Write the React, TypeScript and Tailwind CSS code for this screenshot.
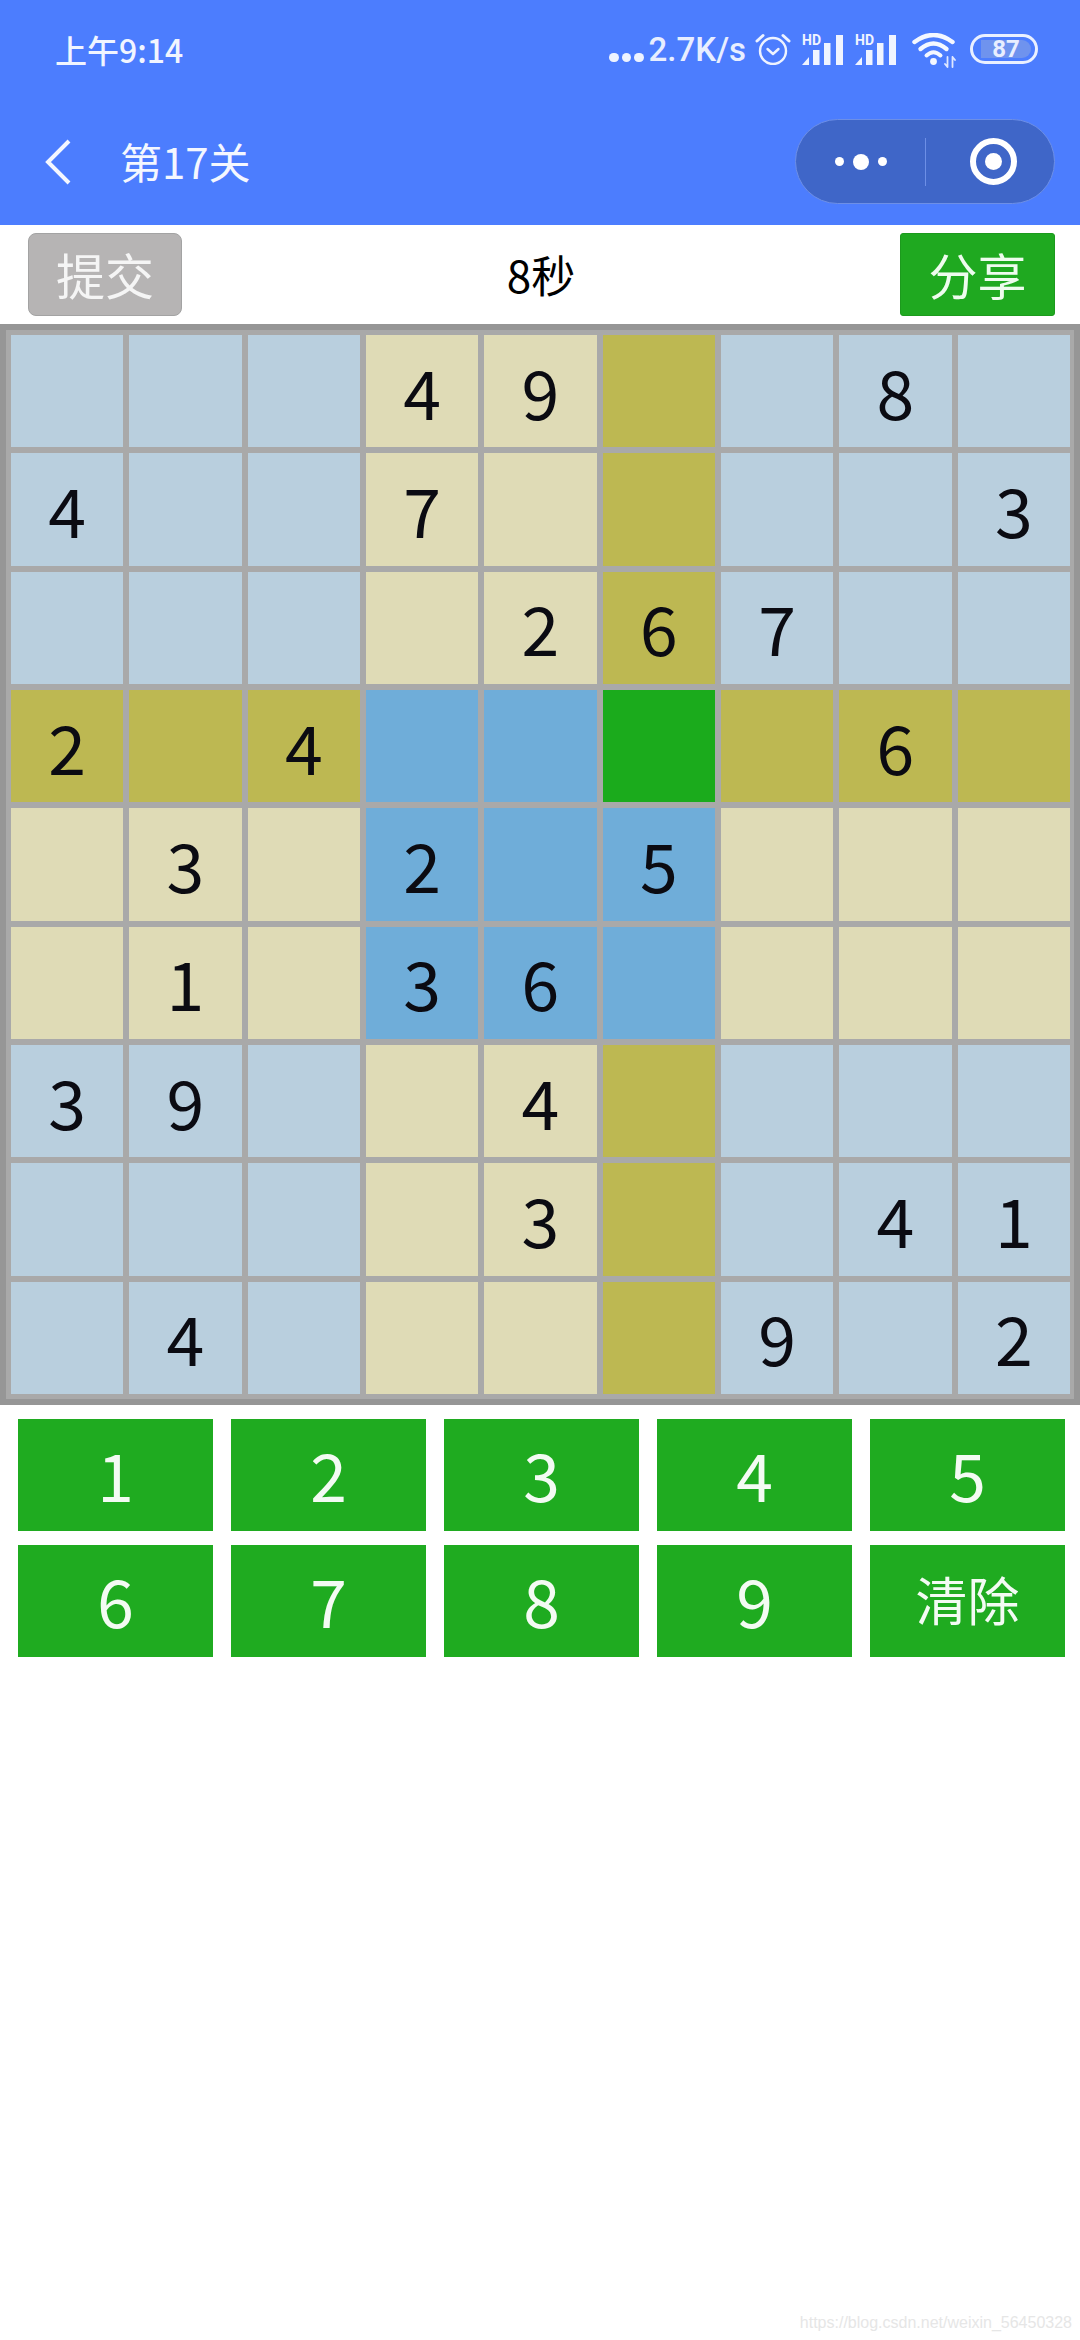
const cjk = "font-['Noto_Sans_CJK_SC',sans-serif]";

const board = [
  "...49..8.",
  "4..7....3",
  "....267..",
  "2.4....6.",
  ".3.2.5...",
  ".1.36....",
  "39..4....",
  "....3..41",
  ".4....9.2",
];

const keys = ["1", "2", "3", "4", "5", "6", "7", "8", "9", "清除"];

function cellColor(r: number, c: number) {
  if (r === 3 && c === 5) return "bg-[#1bab1c]";
  const midRow = r >= 3 && r <= 5;
  const midCol = c >= 3 && c <= 5;
  if (midRow && midCol) return "bg-[#6fadd9]";
  if (r === 3 || c === 5) return "bg-[#bdb852]";
  if (midRow || midCol) return "bg-[#dfdbb6]";
  return "bg-[#b9cfde]";
}

function Signal() {
  return (
    <svg width="41" height="34" viewBox="0 0 41 34" fill="#f0f4ff">
      <text x="0" y="13" fontSize="14" fontWeight="700" fontFamily="Roboto, sans-serif">HD</text>
      <path d="M0 33 L7 25 V33 Z" />
      <rect x="11" y="18" width="6.5" height="15" />
      <rect x="22" y="11" width="6.5" height="22" />
      <rect x="34" y="3" width="7" height="30" />
    </svg>
  );
}

function Alarm() {
  return (
    <svg width="38" height="32" viewBox="0 0 38 32" fill="none" stroke="#eef3ff" strokeLinecap="round" strokeLinejoin="round">
      <circle cx="19" cy="18" r="13" strokeWidth="2.4" />
      <path d="M13.5 16 L19 21 L24.5 16" strokeWidth="2.4" />
      <path d="M3 8 L9 2.5 M35 8 L29 2.5" strokeWidth="3" />
    </svg>
  );
}

function Wifi() {
  return (
    <svg width="44" height="36" viewBox="0 0 44 36" fill="none" stroke="#f4f7ff" strokeLinecap="round">
      <path d="M2.5 9 Q21.5 -5 40.5 9" strokeWidth="4.4" />
      <path d="M8.5 16 Q21.5 5 34.5 16" strokeWidth="4.4" />
      <path d="M14.5 22.5 Q21.5 16 28.5 22.5" strokeWidth="4" />
      <circle cx="21.5" cy="28.5" r="3.4" fill="#f4f7ff" stroke="none" />
      <path d="M35.5 24 V34 M33 31 L35.5 34 M40.5 24 V34 M40.5 24 L43 27" stroke="#dfe7ff" strokeWidth="1.8" />
    </svg>
  );
}

function Battery() {
  return (
    <div className="flex h-[30px] w-[68px] rounded-full border-[3px] border-[#eaf0ff] py-[3px] pr-[4px] pl-[8px]">
      <div className="flex h-full flex-1 items-center justify-center rounded-r-full bg-[#6f93ee] font-['Roboto',sans-serif] text-[24px] leading-none font-bold text-[#e8eeff]">
        87
      </div>
    </div>
  );
}

export default function App() {
  return (
    <div className={`flex h-[2340px] w-[1080px] flex-col overflow-hidden bg-white ${cjk}`}>
      {/* Header */}
      <div className="bg-[#4c7dfe] text-white">
        <div className="flex h-[98px] items-center justify-between pr-[42px] pl-[55px]">
          <span className="text-[32px] leading-none font-medium text-[#f1f5ff]">上午9:14</span>
          <div className="flex items-center">
            <div className="mt-[17px] flex gap-[3px]">
              <span className="h-[9.5px] w-[9.5px] rounded-full bg-[#eef3ff]" />
              <span className="h-[9.5px] w-[9.5px] rounded-full bg-[#eef3ff]" />
              <span className="h-[9.5px] w-[9.5px] rounded-full bg-[#eef3ff]" />
            </div>
            <span className="ml-[5px] font-['Roboto',sans-serif] text-[33px] leading-none font-medium text-[#e8eeff]">
              2.7K/s
            </span>
            <div className="ml-[8px]"><Alarm /></div>
            <div className="ml-[10px]"><Signal /></div>
            <div className="ml-[12px]"><Signal /></div>
            <div className="mt-[3px] ml-[16px]"><Wifi /></div>
            <div className="ml-[14px]"><Battery /></div>
          </div>
        </div>
        <div className="flex h-[127px] items-center justify-between pr-[25px] pl-[45px]">
          <div className="flex items-center gap-[49px]">
            <svg width="26" height="46" viewBox="0 0 26 46" fill="none" stroke="#f4f7ff" strokeWidth="4">
              <path d="M24 2 L3 23 L24 44" />
            </svg>
            <span className="pb-[2px] text-[42px] leading-none text-[#f4f7ff]">第17关</span>
          </div>
          <div className="flex h-[85px] w-[260px] items-center rounded-full border border-[#6d8fe6] bg-[#3f66c8]">
            <div className="flex w-[129px] items-center justify-center gap-[9px]">
              <span className="h-[9px] w-[9px] rounded-full bg-white" />
              <span className="h-[16px] w-[16px] rounded-full bg-white" />
              <span className="h-[9px] w-[9px] rounded-full bg-white" />
            </div>
            <div className="h-[48px] w-px bg-[#6d8fe6]" />
            <div className="flex flex-1 items-center justify-center pl-[6px]">
              <div className="flex h-[47px] w-[47px] items-center justify-center rounded-full border-[6px] border-white">
                <span className="h-[17px] w-[17px] rounded-full bg-white" />
              </div>
            </div>
          </div>
        </div>
      </div>

      {/* Toolbar */}
      <div className="flex h-[99px] items-center justify-between pr-[25px] pl-[28px]">
        <div className="flex h-[83px] w-[154px] items-center justify-center rounded-[8px] border border-[#a3a3a3] bg-[#b6b4b4] pb-[3px] text-[49px] leading-none text-[#f5f5f5]">
          提交
        </div>
        <span className="pb-[2px] text-[44px] leading-none text-black">8秒</span>
        <div className="flex h-[83px] w-[155px] items-center justify-center rounded-[3px] border border-[#1c9a1d] bg-[#1fa920] pb-[3px] text-[49px] leading-none text-[#eefcee]">
          分享
        </div>
      </div>

      {/* Board */}
      <div className="grid h-[1081px] grid-cols-9 grid-rows-9 gap-[6px] border-[6px] border-[#969696] bg-[#a9a9a9] py-[5px] pr-[4px] pl-[5px]">
        {board.map((row, r) =>
          row.split("").map((ch, c) => (
            <div
              key={`${r}-${c}`}
              className={`flex items-center justify-center pb-[1px] text-[68px] leading-none text-[#0b0b12] ${cellColor(r, c)}`}
            >
              {ch === "." ? "" : ch}
            </div>
          )),
        )}
      </div>

      {/* Keypad */}
      <div className="grid grid-cols-5 gap-x-[18px] gap-y-[14px] pt-[14px] pr-[15px] pl-[18px]">
        {keys.map((k) => (
          <div
            key={k}
            className={`flex h-[112px] items-center justify-center bg-[#1fab20] pb-[4px] leading-none text-[#f3fbf3] ${k === "清除" ? "text-[52px]" : "text-[66px]"}`}
          >
            {k}
          </div>
        ))}
      </div>

      <div className="mt-auto self-end pr-[8px] pb-[9px] font-['Liberation_Sans',sans-serif] text-[16px] leading-none text-[#e6e6e6]">
        https://blog.csdn.net/weixin_56450328
      </div>
    </div>
  );
}
